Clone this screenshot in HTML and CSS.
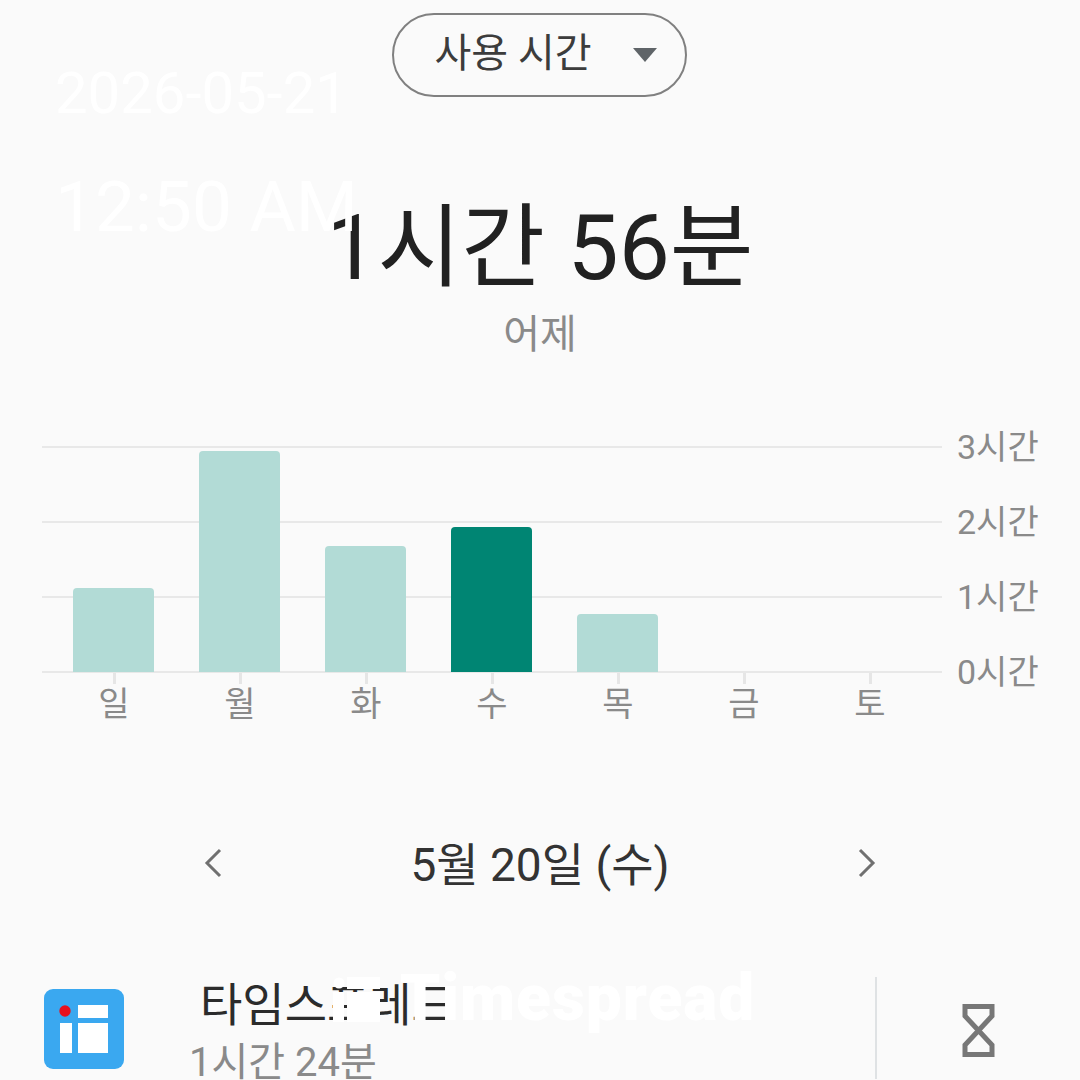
FILE: index.html
```html
<!DOCTYPE html>
<html lang="ko">

<head>
    <meta charset="UTF-8">
    <title>사용 시간</title>
    <link rel="stylesheet" href="styles.css">
</head>

<body>
    <div class="layout">
        <div class="top">
            <button class="select">
                <span>사용 시간</span>
                <i class="arrow"></i>
            </button>
        </div>

        <div class="total">1시간 56분</div>
        <div class="when">어제</div>

        <div class="chart">
            <div class="plot">
                <div class="lines">
                    <i></i><i></i><i></i><i></i>
                </div>
                <div class="bars">
                    <div class="col"><div class="bar" style="height: 84px"></div></div>
                    <div class="col"><div class="bar" style="height: 221px"></div></div>
                    <div class="col"><div class="bar" style="height: 126px"></div></div>
                    <div class="col"><div class="bar on" style="height: 145px"></div></div>
                    <div class="col"><div class="bar" style="height: 58px"></div></div>
                    <div class="col"></div>
                    <div class="col"></div>
                </div>
            </div>
            <ul class="yaxis">
                <li>3시간</li>
                <li>2시간</li>
                <li>1시간</li>
                <li>0시간</li>
            </ul>
            <ul class="days">
                <li>일</li>
                <li>월</li>
                <li>화</li>
                <li>수</li>
                <li>목</li>
                <li>금</li>
                <li>토</li>
            </ul>
        </div>

        <div class="date_nav">
            <svg class="chev" width="18" height="30" viewBox="0 0 18 30"><path d="M16 2 3 15l13 13"/></svg>
            <span>5월 20일 (수)</span>
            <svg class="chev" width="18" height="30" viewBox="0 0 18 30"><path d="M2 2l13 13L2 28"/></svg>
        </div>

        <div class="app_row">
            <svg class="app_icon" width="80" height="80" viewBox="0 0 80 80">
                <rect width="80" height="80" rx="9" fill="#3aa8f0"/>
                <rect x="34" y="16" width="30" height="13" fill="#fff"/>
                <rect x="16" y="34" width="12" height="30" fill="#fff"/>
                <rect x="34" y="34" width="30" height="30" fill="#fff"/>
                <circle cx="21" cy="22" r="5.7" fill="#e8101c"/>
            </svg>
            <div class="app_info">
                <p class="app_name">타임스프레드</p>
                <p class="app_time">1시간 24분</p>
            </div>
            <div class="app_timer">
                <svg width="33" height="53" viewBox="0 0 33 53">
                    <path d="M3 2.5h27V12L3 41v9.500h27V41L3 12z"/>
                </svg>
            </div>
        </div>

        <div class="stamp">
            <div class="stamp_date">2026-05-21</div>
            <div class="stamp_time">12:50 AM</div>
        </div>
        <div class="brand">
            <svg width="47" height="45" viewBox="0 0 47 45">
                <circle cx="6" cy="6" r="5.500"/>
                <rect x="14" y="0" width="33" height="12"/>
                <rect x="0" y="15" width="11" height="30"/>
                <rect x="14" y="15" width="33" height="30"/>
            </svg>
            <span>Timespread</span>
        </div>
    </div>
</body>

</html>
```

FILE: styles.css
```css
* {
    box-sizing: border-box;
}

ul {
    padding: 0;
    margin: 0;
    list-style: none;
}

p {
    padding: 0;
    margin: 0;
}

body {
    margin: 0;
    background-color: #fafafa;
    font-family: "Roboto", "Noto Sans CJK KR", sans-serif;
}

.layout {
    position: relative;
    width: 1080px;
    height: 1080px;
    overflow: hidden;
    background-color: #fafafa;
}

.top {
    display: flex;
    justify-content: center;
    padding: 13px 2px 0 0;
}

.select {
    display: flex;
    align-items: center;
    justify-content: space-between;
    width: 295px;
    height: 84px;
    padding: 0 28px 10px 41px;
    background: none;
    border: 2px solid #808080;
    border-radius: 42px;
    font: inherit;
    font-size: 40px;
    color: #3c3c3c;
}

.arrow {
    width: 0;
    height: 0;
    margin: 10px 0 0 0;
    border-left: 12px solid transparent;
    border-right: 12px solid transparent;
    border-top: 14px solid #5f6468;
}

.total {
    margin: 103px 0 0 0;
    height: 96px;
    line-height: 96px;
    text-align: center;
    font-size: 91px;
    color: #212121;
}

.when {
    margin: 11px 0 0 0;
    height: 56px;
    line-height: 56px;
    text-align: center;
    font-size: 40px;
    color: #8a8a8a;
}

.chart {
    display: grid;
    grid-template-columns: 900px auto;
    column-gap: 15px;
    margin: 83px 0 0 42px;
}

.plot {
    display: grid;
    height: 227px;
}

.lines,
.bars {
    grid-area: 1 / 1;
}

.lines {
    display: flex;
    flex-direction: column;
    justify-content: space-between;
}

.lines i {
    display: block;
    height: 2px;
    background-color: #e8e8e8;
}

.bars {
    display: grid;
    grid-template-columns: repeat(7, 126px);
    padding: 0 0 0 8px;
    height: 226px;
}

.col {
    display: flex;
    align-items: flex-end;
    justify-content: center;
}

.bar {
    width: 81px;
    background-color: #b2dbd6;
    border-radius: 4px 4px 0 0;
}

.bar.on {
    background-color: #008573;
}

.yaxis {
    display: flex;
    flex-direction: column;
    justify-content: space-between;
    height: 227px;
    font-size: 34px;
    line-height: 2px;
    color: #8a8a8a;
}

.yaxis li {
    height: 2px;
}

.days {
    display: grid;
    grid-template-columns: repeat(7, 126px);
    padding: 0 0 0 9px;
    font-size: 34px;
    color: #8a8a8a;
    text-align: center;
}

.days li {
    padding: 11px 0 0 0;
    line-height: 40px;
    background: linear-gradient(#e6e6e6, #e6e6e6) center top / 3px 11px no-repeat;
}

.date_nav {
    display: flex;
    align-items: center;
    justify-content: space-between;
    width: 672px;
    margin: 107px auto 0 auto;
    height: 60px;
    font-size: 46px;
    color: #333;
}

.chev {
    margin: 3px 0 0 0;
    fill: none;
    stroke: #707070;
    stroke-width: 3;
}

.app_row {
    display: flex;
    margin: 86px 0 0 0;
}

.app_icon {
    flex: none;
    margin: 12px 0 0 44px;
}

.app_info {
    width: 751px;
    padding: 0 0 0 65px;
}

.app_name {
    padding: 0 0 0 11px;
    line-height: 56px;
    font-size: 46px;
    color: #2b2b2b;
}

.app_time {
    margin: 5px 0 0 0;
    line-height: 50px;
    font-size: 40px;
    color: #8a8a8a;
}

.app_timer {
    display: flex;
    justify-content: center;
    width: 205px;
    height: 102px;
    padding: 27px 0 0 0;
    border-left: 2px solid #dfe2e4;
}

.app_timer svg {
    flex: none;
    fill: none;
    stroke: #777;
    stroke-width: 5;
}

/* 水印 */
.stamp {
    position: absolute;
    top: 57px;
    left: 55px;
    color: #fff;
}

.stamp_date {
    font-size: 58px;
    line-height: 72px;
}

.stamp_time {
    margin: 33px 0 0 0;
    font-size: 71px;
    line-height: 90px;
}

.brand {
    position: absolute;
    top: 966px;
    left: 333px;
    display: flex;
    align-items: center;
    gap: 20px;
    font-size: 64px;
    line-height: 66px;
    font-weight: 900;
    letter-spacing: 1px;
    color: #fff;
}

.brand svg {
    flex: none;
    margin: 0 0 0 0;
    fill: #fff;
}
```
